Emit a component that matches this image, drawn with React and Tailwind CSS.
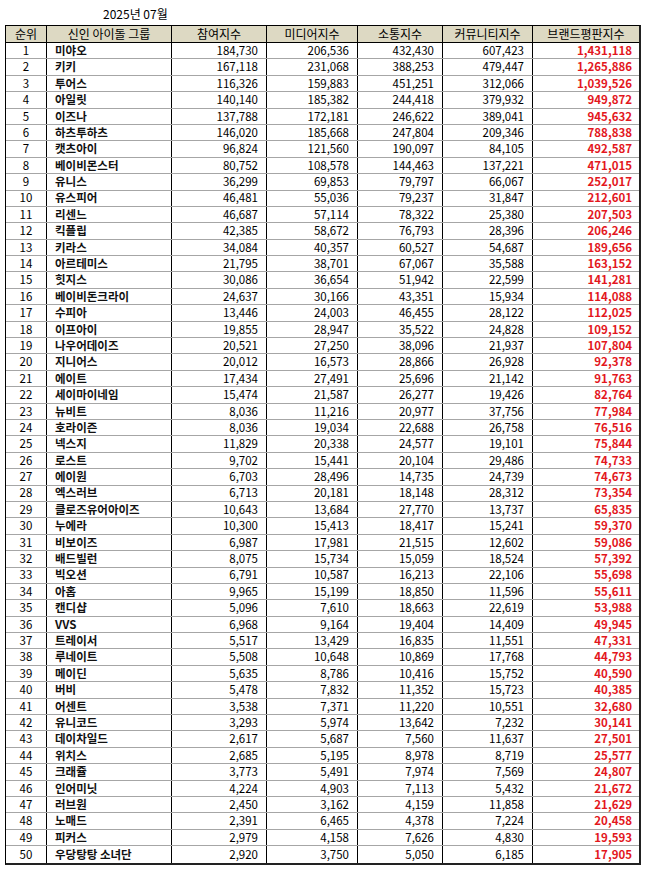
const rows = [
  ['미야오', '184,730', '206,536', '432,430', '607,423', '1,431,118'],
  ['키키', '167,118', '231,068', '388,253', '479,447', '1,265,886'],
  ['투어스', '116,326', '159,883', '451,251', '312,066', '1,039,526'],
  ['아일릿', '140,140', '185,382', '244,418', '379,932', '949,872'],
  ['이즈나', '137,788', '172,181', '246,622', '389,041', '945,632'],
  ['하츠투하츠', '146,020', '185,668', '247,804', '209,346', '788,838'],
  ['캣츠아이', '96,824', '121,560', '190,097', '84,105', '492,587'],
  ['베이비몬스터', '80,752', '108,578', '144,463', '137,221', '471,015'],
  ['유니스', '36,299', '69,853', '79,797', '66,067', '252,017'],
  ['유스피어', '46,481', '55,036', '79,237', '31,847', '212,601'],
  ['리센느', '46,687', '57,114', '78,322', '25,380', '207,503'],
  ['킥플립', '42,385', '58,672', '76,793', '28,396', '206,246'],
  ['키라스', '34,084', '40,357', '60,527', '54,687', '189,656'],
  ['아르테미스', '21,795', '38,701', '67,067', '35,588', '163,152'],
  ['힛지스', '30,086', '36,654', '51,942', '22,599', '141,281'],
  ['베이비돈크라이', '24,637', '30,166', '43,351', '15,934', '114,088'],
  ['수피아', '13,446', '24,003', '46,455', '28,122', '112,025'],
  ['이프아이', '19,855', '28,947', '35,522', '24,828', '109,152'],
  ['나우어데이즈', '20,521', '27,250', '38,096', '21,937', '107,804'],
  ['지니어스', '20,012', '16,573', '28,866', '26,928', '92,378'],
  ['에이트', '17,434', '27,491', '25,696', '21,142', '91,763'],
  ['세이마이네임', '15,474', '21,587', '26,277', '19,426', '82,764'],
  ['뉴비트', '8,036', '11,216', '20,977', '37,756', '77,984'],
  ['호라이즌', '8,036', '19,034', '22,688', '26,758', '76,516'],
  ['넥스지', '11,829', '20,338', '24,577', '19,101', '75,844'],
  ['로스트', '9,702', '15,441', '20,104', '29,486', '74,733'],
  ['에이원', '6,703', '28,496', '14,735', '24,739', '74,673'],
  ['엑스러브', '6,713', '20,181', '18,148', '28,312', '73,354'],
  ['클로즈유어아이즈', '10,643', '13,684', '27,770', '13,737', '65,835'],
  ['누에라', '10,300', '15,413', '18,417', '15,241', '59,370'],
  ['비보이즈', '6,987', '17,981', '21,515', '12,602', '59,086'],
  ['배드빌런', '8,075', '15,734', '15,059', '18,524', '57,392'],
  ['빅오션', '6,791', '10,587', '16,213', '22,106', '55,698'],
  ['아홉', '9,965', '15,199', '18,850', '11,596', '55,611'],
  ['캔디샵', '5,096', '7,610', '18,663', '22,619', '53,988'],
  ['VVS', '6,968', '9,164', '19,404', '14,409', '49,945'],
  ['트레이서', '5,517', '13,429', '16,835', '11,551', '47,331'],
  ['루네이트', '5,508', '10,648', '10,869', '17,768', '44,793'],
  ['메이딘', '5,635', '8,786', '10,416', '15,752', '40,590'],
  ['버비', '5,478', '7,832', '11,352', '15,723', '40,385'],
  ['어센트', '3,538', '7,371', '11,220', '10,551', '32,680'],
  ['유니코드', '3,293', '5,974', '13,642', '7,232', '30,141'],
  ['데이차일드', '2,617', '5,687', '7,560', '11,637', '27,501'],
  ['위치스', '2,685', '5,195', '8,978', '8,719', '25,577'],
  ['크래쥴', '3,773', '5,491', '7,974', '7,569', '24,807'],
  ['인어미닛', '4,224', '4,903', '7,113', '5,432', '21,672'],
  ['러브원', '2,450', '3,162', '4,159', '11,858', '21,629'],
  ['노매드', '2,391', '6,465', '4,378', '7,224', '20,458'],
  ['피커스', '2,979', '4,158', '7,626', '4,830', '19,593'],
  ['우당탕탕 소녀단', '2,920', '3,750', '5,050', '6,185', '17,905'],
]

const headers = ['순위', '신인 아이돌 그룹', '참여지수', '미디어지수', '소통지수', '커뮤니티지수', '브랜드평판지수']

const cols = 'grid grid-cols-[41px_125px_95px_91px_85px_90px_106px]'

export default function App() {
  return (
    <div className="w-[647px] h-[871px] bg-white text-black font-['Noto_Sans_CJK_KR','Noto_Sans',sans-serif]">
      <div className="h-[25px] pl-[103px] pt-[8px] text-[12px] leading-none">2025년 07월</div>
      <div className="ml-[5px] w-[636px] border-t border-l border-black border-r-2 border-b-2 border-r-[#222] border-b-[#222]">
        <div className={`${cols} h-[17px] bg-[#ddd9c3] border-b border-black text-[12px] leading-none`}>
          {headers.map((h, i) => (
            <div
              key={h}
              className={`flex items-center justify-center ${i < headers.length - 1 ? 'border-r border-black' : ''}`}
            >
              {h}
            </div>
          ))}
        </div>
        {rows.map((r, idx) => (
          <div
            key={r[0]}
            className={`${cols} h-[16.4px] text-[11.5px] leading-none ${idx < rows.length - 1 ? 'border-b border-[#a6a6a6]' : ''}`}
          >
            <div className="flex items-center justify-center border-r border-black">{idx + 1}</div>
            <div className="flex items-center pl-[8px] font-bold text-[#111] border-r border-black">{r[0]}</div>
            <div className="flex items-center justify-end pr-[8px] border-r border-black">{r[1]}</div>
            <div className="flex items-center justify-end pr-[8px] border-r border-black">{r[2]}</div>
            <div className="flex items-center justify-end pr-[8px] border-r border-black">{r[3]}</div>
            <div className="flex items-center justify-end pr-[8px] border-r border-black">{r[4]}</div>
            <div className="flex items-center justify-end pr-[7px] font-bold text-[#e3171d]">{r[5]}</div>
          </div>
        ))}
      </div>
    </div>
  )
}
